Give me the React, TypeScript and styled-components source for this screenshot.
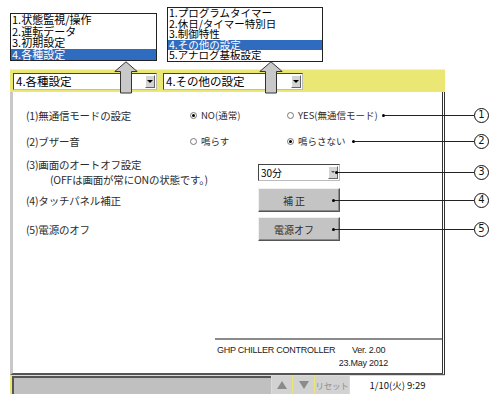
import React from "react";
import styled, { createGlobalStyle } from "styled-components";

const Global = createGlobalStyle`
  html, body { margin: 0; padding: 0; background: #fff; }
  body { font-family: "Noto Sans CJK JP", "Noto Sans", sans-serif; color: #000; }
`;

const Page = styled.div`
  position: relative;
  width: 495px;
  height: 394px;
  overflow: hidden;
  background: #fff;
`;

const TopMenus = styled.div`
  display: flex;
  align-items: flex-start;
  gap: 10px;
  height: 69px;
  padding-left: 10px;
  box-sizing: border-box;
`;

const Menu = styled.div<{ $top: number; $w: number }>`
  margin-top: ${(p) => p.$top}px;
  width: ${(p) => p.$w}px;
  border: 1px solid #222;
  background: #fff;
  box-sizing: border-box;
`;

const MenuItem = styled.div<{ $active?: boolean; $h: number; $fs: number }>`
  height: ${(p) => p.$h}px;
  line-height: ${(p) => p.$h}px;
  font-size: ${(p) => p.$fs}px;
  padding-left: 1px;
  white-space: nowrap;
  background: ${(p) => (p.$active ? "#2f6cc0" : "transparent")};
  color: ${(p) => (p.$active ? "#fff" : "#000")};
`;

const ArrowSvg = styled.svg<{ $x: number }>`
  position: absolute;
  left: ${(p) => p.$x}px;
  top: 61px;
  z-index: 2;
`;

const Frame = styled.div`
  margin-left: 10px;
  width: 435px;
  display: flex;
  flex-direction: column;
`;

const Header = styled.div`
  height: 23px;
  background: #ebe774;
  border-top: 1px solid #f6f3b8;
  box-sizing: border-box;
  display: flex;
  align-items: center;
  gap: 6px;
  padding-left: 3px;
`;

const Select = styled.div<{ $w: number; $fs?: number }>`
  width: ${(p) => p.$w}px;
  height: 17px;
  box-sizing: border-box;
  background: #fff;
  border: 1px solid;
  border-color: #444 #bbb #bbb #444;
  display: flex;
  align-items: center;
  justify-content: space-between;
  font-size: ${(p) => p.$fs ?? 11.5}px;
  padding-left: 2px;
  white-space: nowrap;
  flex: none;
`;

const SelectBtn = styled.span<{ $light?: boolean }>`
  width: 10px;
  height: 13px;
  box-sizing: border-box;
  background: #d4d4d4;
  border: 1px solid;
  border-color: #fff #666 #666 #fff;
  display: flex;
  align-items: center;
  justify-content: center;
  margin-right: 1px;
  &::after {
    content: "";
    border-left: ${(p) => (p.$light ? 2 : 3)}px solid transparent;
    border-right: ${(p) => (p.$light ? 2 : 3)}px solid transparent;
    border-top: ${(p) => (p.$light ? 2 : 3)}px solid ${(p) => (p.$light ? "#555" : "#000")};
  }
`;

const Panel = styled.div`
  height: 283px;
  box-sizing: border-box;
  background: #fff;
  border-left: 3px solid #c8c8c8;
  border-right: 3px double #333;
  border-bottom: 2px solid #555;
  display: flex;
  flex-direction: column;
  padding-top: 15px;
`;

const Row = styled.div<{ $h: number; $mt: number }>`
  display: flex;
  align-items: center;
  height: ${(p) => p.$h}px;
  margin-top: ${(p) => p.$mt}px;
  margin-right: -47px;
  padding-left: 13px;
  position: relative;
`;

const Label = styled.div<{ $w: number }>`
  width: ${(p) => p.$w}px;
  flex: none;
  font-size: 10.5px;
  line-height: 15px;
  letter-spacing: -0.2px;
  white-space: nowrap;
  color: #2c2c2c;
`;

const SubLine = styled.div`
  padding-left: 24px;
`;

const Radio = styled.div<{ $w?: number }>`
  display: flex;
  align-items: center;
  gap: 4px;
  font-size: 9.5px;
  white-space: nowrap;
  flex: none;
  width: ${(p) => (p.$w ? `${p.$w}px` : "auto")};
  color: #2c2c2c;
`;

const RadioMark = styled.span<{ $on?: boolean }>`
  width: 7px;
  height: 7px;
  border-radius: 50%;
  border: 1px solid #777;
  box-sizing: border-box;
  display: flex;
  align-items: center;
  justify-content: center;
  &::after {
    content: "";
    width: 3px;
    height: 3px;
    border-radius: 50%;
    background: ${(p) => (p.$on ? "#000" : "transparent")};
  }
`;

const Button = styled.div`
  width: 82px;
  height: 24px;
  box-sizing: border-box;
  flex: none;
  background: #c4c4c4;
  border: 1px solid;
  border-color: #f0f0f0 #555 #555 #f0f0f0;
  box-shadow: inset -1px -1px 0 #8a8a8a;
  display: flex;
  align-items: center;
  justify-content: center;
  padding-right: 10px;
  font-size: 10px;
  color: #2c2c2c;
  white-space: pre;
`;

const Leader = styled.div<{ $ml: number }>`
  flex: 1;
  display: flex;
  align-items: center;
  margin-left: ${(p) => p.$ml}px;
  position: relative;
  z-index: 1;
`;

const Dot = styled.span`
  width: 3px;
  height: 3px;
  border-radius: 50%;
  background: #000;
  flex: none;
`;

const Line = styled.span`
  flex: 1;
  height: 1px;
  background: #222;
`;

const Num = styled.span`
  width: 15px;
  height: 15px;
  box-sizing: border-box;
  border: 1.4px solid #111;
  border-radius: 50%;
  background: #fff;
  flex: none;
  display: flex;
  align-items: center;
  justify-content: center;
  font-family: "DejaVu Sans", sans-serif;
  font-size: 10px;
  line-height: 1;
  color: #111;
`;

const Footer = styled.div`
  margin-top: auto;
  margin-left: 202px;
  border-top: 2px solid #8a8a8a;
  height: 35px;
  box-sizing: border-box;
  padding: 4px 0 0 2px;
`;

const FooterText = styled.div`
  width: 171px;
  display: grid;
  grid-template-columns: 135px 1fr;
  font-family: "Liberation Sans", Arial, sans-serif;
  font-size: 9px;
  line-height: 13px;
  letter-spacing: -0.25px;
  color: #222;
`;

const FooterDate = styled.div`
  grid-column: 1 / span 2;
  text-align: right;
`;

const StatusBar = styled.div`
  display: flex;
  height: 19px;
  background: #ebe774;
  padding: 1px 0 0 2px;
  gap: 1px;
  box-sizing: border-box;
`;

const MsgField = styled.div`
  width: 259px;
  flex: none;
  background: #c0c0c0;
  border-top: 2px solid #555;
  border-left: 2px solid #555;
  box-sizing: border-box;
`;

const SmallBtn = styled.div<{ $w: number }>`
  width: ${(p) => p.$w}px;
  flex: none;
  background: #d2d2d2;
  display: flex;
  align-items: center;
  justify-content: center;
  color: #8e8e8e;
  font-size: 8.5px;
  letter-spacing: -0.3px;
  white-space: nowrap;
  overflow: hidden;
`;

const Tri = styled.span<{ $down?: boolean }>`
  border-left: 5px solid transparent;
  border-right: 5px solid transparent;
  ${(p) =>
    p.$down
      ? "border-top: 8px solid #8a8a8a;"
      : "border-bottom: 8px solid #8a8a8a;"}
`;

const TimeField = styled.div`
  flex: 1;
  background: #fff;
  display: flex;
  align-items: center;
  justify-content: center;
  font-size: 9.5px;
  color: #111;
  white-space: nowrap;
`;

const UpArrow: React.FC<{ x: number }> = ({ x }) => (
  <ArrowSvg $x={x} width="24" height="33" viewBox="0 0 24 33">
    <path
      d="M12 0.8 L23.2 10.5 L17.5 10.5 L17.5 32 L6.5 32 L6.5 10.5 L0.8 10.5 Z"
      fill="#c9c9c9"
      stroke="#333"
      strokeWidth="1"
      strokeLinejoin="miter"
    />
  </ArrowSvg>
);

const menu1 = ["1.状態監視/操作", "2.運転データ", "3.初期設定", "4.各種設定"];
const menu2 = [
  "1.プログラムタイマー",
  "2.休日/タイマー特別日",
  "3.制御特性",
  "4.その他の設定",
  "5.アナログ基板設定",
];

export default function App() {
  return (
    <Page>
      <Global />
      <TopMenus>
        <Menu $top={13} $w={147}>
          {menu1.map((m, i) => (
            <MenuItem key={m} $h={11.5} $fs={11} $active={i === 3}>
              {m}
            </MenuItem>
          ))}
        </Menu>
        <Menu $top={7} $w={156}>
          {menu2.map((m, i) => (
            <MenuItem key={m} $h={10.6} $fs={10.5} $active={i === 3}>
              {m}
            </MenuItem>
          ))}
        </Menu>
      </TopMenus>
      <UpArrow x={114} />
      <UpArrow x={259} />
      <Frame>
        <Header>
          <Select $w={144}>
            4.各種設定
            <SelectBtn />
          </Select>
          <Select $w={140}>
            4.その他の設定
            <SelectBtn />
          </Select>
        </Header>
        <Panel>
          <Row $h={16} $mt={0}>
            <Label $w={164}>(1)無通信モードの設定</Label>
            <Radio $w={97}>
              <RadioMark $on />
              NO(通常)
            </Radio>
            <Radio>
              <RadioMark />
              YES(無通信モード)
            </Radio>
            <Leader $ml={4}>
              <Dot />
              <Line />
              <Num>1</Num>
            </Leader>
          </Row>
          <Row $h={16} $mt={10}>
            <Label $w={164}>(2)ブザー音</Label>
            <Radio $w={97}>
              <RadioMark />
              鳴らす
            </Radio>
            <Radio>
              <RadioMark $on />
              鳴らさない
            </Radio>
            <Leader $ml={6}>
              <Dot />
              <Line />
              <Num>2</Num>
            </Leader>
          </Row>
          <Row $h={30} $mt={8}>
            <Label $w={232}>
              (3)画面のオートオフ設定
              <SubLine>(OFFは画面が常にONの状態です。)</SubLine>
            </Label>
            <Select $w={82} $fs={10}>
              30分
              <SelectBtn $light />
            </Select>
            <Leader $ml={-5}>
              <Dot />
              <Line />
              <Num>3</Num>
            </Leader>
          </Row>
          <Row $h={24} $mt={1}>
            <Label $w={232}>(4)タッチパネル補正</Label>
            <Button>{"補 正"}</Button>
            <Leader $ml={-8}>
              <Dot />
              <Line />
              <Num>4</Num>
            </Leader>
          </Row>
          <Row $h={24} $mt={5}>
            <Label $w={232}>(5)電源のオフ</Label>
            <Button>電源オフ</Button>
            <Leader $ml={-8}>
              <Dot />
              <Line />
              <Num>5</Num>
            </Leader>
          </Row>
          <Footer>
            <FooterText>
              <span>GHP CHILLER CONTROLLER</span>
              <span>Ver. 2.00</span>
              <FooterDate>23.May 2012</FooterDate>
            </FooterText>
          </Footer>
        </Panel>
        <StatusBar>
          <MsgField />
          <SmallBtn $w={20}>
            <Tri />
          </SmallBtn>
          <SmallBtn $w={21}>
            <Tri $down />
          </SmallBtn>
          <SmallBtn $w={34}>リセット</SmallBtn>
          <TimeField>1/10(火) 9:29</TimeField>
        </StatusBar>
      </Frame>
    </Page>
  );
}
